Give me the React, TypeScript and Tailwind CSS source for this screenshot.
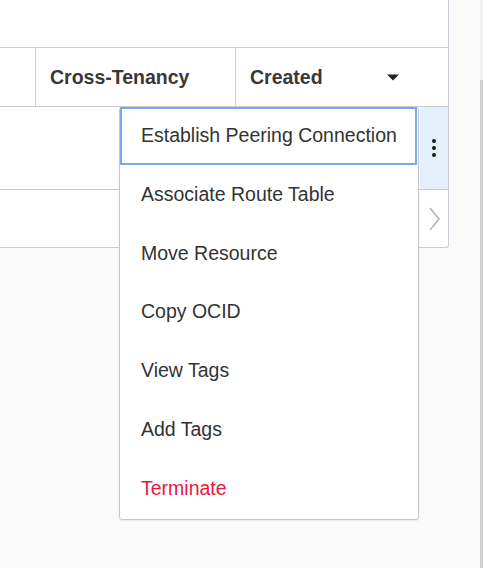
import React from "react";

const items = [
  "Establish Peering Connection",
  "Associate Route Table",
  "Move Resource",
  "Copy OCID",
  "View Tags",
  "Add Tags",
  "Terminate",
];

export default function App() {
  return (
    <div
      className="relative flex w-[483px] h-[568px] overflow-hidden bg-[#fafafa]"
      style={{ fontFamily: '"Liberation Sans", Arial, sans-serif' }}
    >
      {/* table column */}
      <div className="flex w-[449px] flex-col">
        <div className="h-[48px] border-r border-b border-[#c6cdd4] bg-white" />
        <div className="flex h-[59px] border-r border-b border-[#c6cdd4] bg-white text-[19.5px] font-bold text-[#383838]">
          <div className="w-[36px] border-r border-[#c6cdd4]" />
          <div className="flex w-[200px] items-center border-r border-[#c6cdd4] pl-[14px] pt-[1px]">
            Cross-Tenancy
          </div>
          <div className="flex flex-1 items-center justify-between pl-[14px] pr-[49px] pt-[1px]">
            <span>Created</span>
            <svg width="12" height="7" viewBox="0 0 12 7">
              <path d="M0 0.5 L12 0.5 L6 6.5 Z" fill="#222" />
            </svg>
          </div>
        </div>
        <div className="flex h-[83px] border-r border-b border-[#c6cdd4] bg-white">
          <div className="flex-1" />
          <div className="flex w-[28px] flex-col items-center justify-center gap-[3px] bg-[#e3effa]">
            <span className="block h-[4px] w-[4px] rounded-full bg-[#1a1a1a]" />
            <span className="block h-[4px] w-[4px] rounded-full bg-[#1a1a1a]" />
            <span className="block h-[4px] w-[4px] rounded-full bg-[#1a1a1a]" />
          </div>
        </div>
        <div className="flex h-[58px] rounded-br-[3px] border-r border-b border-[#c6cdd4] bg-white">
          <div className="flex-1" />
          <div className="flex w-[28px] items-center justify-center">
            <svg width="14" height="24" viewBox="0 0 14 24">
              <path d="M3 1 L12 12 L3 23" fill="none" stroke="#b3b3b3" strokeWidth="1.5" />
            </svg>
          </div>
        </div>
      </div>

      {/* right gutter with scrollbar */}
      <div className="flex flex-1 justify-end">
        <div className="flex w-[3px] flex-col">
          <div className="h-[80px] bg-[#f0f0f0]" />
          <div className="flex-1 bg-[#cfcfcf]" />
        </div>
      </div>

      {/* dropdown menu */}
      <div className="absolute left-[119px] top-[107px] flex h-[413px] w-[300px] flex-col rounded-[3px] border border-[#c2c8cf] bg-white shadow-[0_1px_2px_rgba(0,0,0,0.08)]">
        {items.map((t, i) => (
          <div
            key={t}
            className={`relative flex flex-1 items-center pl-[21px] pb-[3px] text-[19.5px] ${
              i === 6 ? "text-[#e8173f]" : "text-[#333]"
            }`}
          >
            {i === 0 && (
              <div className="pointer-events-none absolute -top-px left-0 right-px bottom-[2px] border-2 border-[#7aa9e4]" />
            )}
            <span className="relative">{t}</span>
          </div>
        ))}
      </div>
    </div>
  );
}
